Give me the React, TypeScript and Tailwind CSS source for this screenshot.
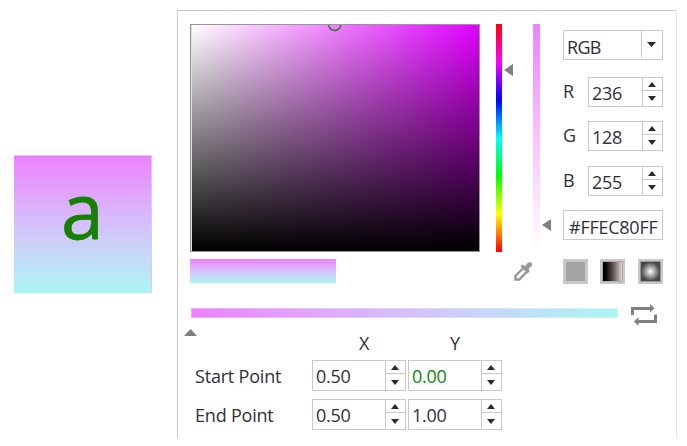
import React from "react";

function Triangle({ points, w, h, fill = "#808080" }: { points: string; w: number; h: number; fill?: string }) {
  return (
    <svg width={w} height={h} viewBox={`0 0 ${w} ${h}`} className="block shrink-0">
      <polygon points={points} fill={fill} />
    </svg>
  );
}

function Spinner({ value, size, text = "" }: { value: string; size: string; text?: string }) {
  return (
    <div className={`flex shrink-0 border border-[#c9c9c9] ${size}`}>
      <div className={`flex-1 pt-[2px] pl-[3px] leading-[26px] tracking-[-0.3px] ${text}`}>{value}</div>
      <div className="flex w-[20px] flex-col border-l border-[#c9c9c9]">
        <div className="flex h-[13px] items-center justify-center border-b border-[#c9c9c9] pr-px">
          <Triangle points="4,0 8,5 0,5" w={8} h={5} fill="#2b2b2b" />
        </div>
        <div className="flex flex-1 items-center justify-center pr-px">
          <Triangle points="0,0 8,0 4,5" w={8} h={5} fill="#2b2b2b" />
        </div>
      </div>
    </div>
  );
}

function Channel({ name, value }: { name: string; value: string }) {
  return (
    <div className="flex h-[30px] justify-between">
      <span className="leading-[28px]">{name}</span>
      <Spinner value={value} size="h-[30px] w-[75px]" />
    </div>
  );
}

function PointRow({ label, x, y, green = "" }: { label: string; x: string; y: string; green?: string }) {
  return (
    <div className="flex h-[31px] gap-[2px] pl-[17px]">
      <span className="w-[115px] pt-[1px] leading-[31px] tracking-[-0.2px]">{label}</span>
      <Spinner value={x} size="h-[31px] w-[94px]" />
      <Spinner value={y} size="h-[31px] w-[94px]" text={green} />
    </div>
  );
}

export default function App() {
  return (
    <div className="flex h-[446px] w-[687px] overflow-hidden bg-white font-['Open_Sans','Noto_Sans',sans-serif] text-[18px] text-[#303036]">
      <div className="mt-[155px] ml-[14px] h-[138px] w-[138px] shrink-0 border-t border-r border-[#e4c4fa] bg-linear-to-b from-[#ec80ff] to-[#aaf6f3] text-center text-[77px] leading-[108px] text-[#178000] [-webkit-text-stroke:0.8px_#178000]">
        a
      </div>
      <div className="mt-[10px] ml-[25px] h-[428px] w-[500px] shrink-0 border-t border-r border-l border-t-[#c9c9c9] border-r-[#e5e5e5] border-l-[#c9c9c9]">
        <div className="mt-[13px] flex h-[228px] pl-[12px]">
          <div className="relative h-[228px] w-[290px] overflow-hidden border border-[#969696] bg-[linear-gradient(to_top,#000,transparent),linear-gradient(to_right,#fff,#e000ff)]">
            <div className="h-full w-px bg-[#e0e0e0]" />
            <svg className="absolute top-0 left-[137px]" width="14" height="7" viewBox="0 0 14 7">
              <path d="M.7 0a6 5.5 0 0 0 12 0" fill="none" stroke="#31752f" strokeWidth="1.4" />
            </svg>
          </div>
          <div className="ml-[16px] w-[6px] bg-[linear-gradient(to_bottom,#f00,#f0f_16.7%,#00f_33.3%,#0ff_50%,#0f0_66.7%,#ff0_83.3%,#f00)]" />
          <div className="ml-[2px] w-[9px] pt-[40px]">
            <Triangle points="9,0 9,12 0,6" w={9} h={12} />
          </div>
          <div className="ml-[20px] w-[7px] bg-linear-to-b from-[#ec80ff] to-white" />
          <div className="ml-[2px] w-[9px] pt-[195px]">
            <Triangle points="9,0 9,12 0,6" w={9} h={12} />
          </div>
          <div className="ml-[12px] flex w-[100px] flex-col pt-[6px]">
            <div className="flex h-[30px] shrink-0 border border-[#c9c9c9]">
              <span className="flex-1 pt-[2px] pl-[3px] leading-[28px] tracking-[-0.7px]">RGB</span>
              <span className="mb-px flex w-[21px] items-center justify-center border-l border-[#c9c9c9] pr-[2px]">
                <Triangle points="0,0 9,0 4.5,5" w={9} h={5} fill="#2b2b2b" />
              </span>
            </div>
            <div className="mt-[17px] flex flex-col">
              <Channel name="R" value="236" />
              <div className="h-[14px]" />
              <Channel name="G" value="128" />
              <div className="h-[15px]" />
              <Channel name="B" value="255" />
            </div>
            <div className="mt-[14px] h-[30px] shrink-0 border border-[#c9c9c9] pt-[2px] pl-[5px] leading-[28px] tracking-[-0.25px]">#FFEC80FF</div>
          </div>
        </div>
        <div className="mt-[7px] flex h-[25px] pl-[12px]">
          <div className="h-[24px] w-[146px] bg-linear-to-b from-[#ec80ff] to-[#aaf6f3]" />
          <svg className="mt-[3px] ml-[178px]" width="18" height="19" viewBox="0 0 18 19">
            <path d="M10 5.5L1.5 13.7V17.5H5.2L13.5 9.2" fill="#fff" stroke="#969696" strokeWidth="2.4" />
            <path d="M6.5 4.5l2-2L11 4.3 13.7 1Q16-.6 17.5 1T17.2 4.3L14.5 7l1.3 2-2 2.5z" fill="#969696" />
          </svg>
          <div className="ml-[31px] h-[25px] w-[25px] border-[3px] border-[#c9c9c9] bg-[#a4a4a4]" />
          <div className="ml-[12px] h-[25px] w-[25px] border-2 border-[#c9c9c9] bg-[#aaa] p-px">
            <div className="h-full w-full bg-linear-to-r from-black to-[#e2d1d1]" />
          </div>
          <div className="ml-[13px] h-[25px] w-[25px] border-2 border-[#c9c9c9] bg-[#999] p-px">
            <div className="h-full w-full bg-[radial-gradient(circle_closest-side,#fff,#484848)]" />
          </div>
        </div>
        <div className="mt-[20px] flex h-[22px] pl-[13px]">
          <div className="mt-[4px] h-[10px] w-[427px] border border-[#ffffff50] bg-linear-to-r from-[#ec80ff] to-[#aaf6f3] [background-origin:border-box]" />
          <svg className="ml-[13px]" width="26" height="22" viewBox="0 0 26 22" fill="#808080">
            <path d="M0 3H19V0L23.5 4.2L19 8.5V6H3V11H0Z" />
            <path d="M26 19H7.5V22L3 17.5L7.5 13V16H23V10.5H26Z" />
          </svg>
        </div>
        <div className="mt-[3px] ml-[6px]">
          <Triangle points="6.5,0 13,7 0,7" w={13} h={7} />
        </div>
        <div className="flex h-[24px] pl-[181px] leading-[14px]">
          <span className="w-[91px]">X</span>
          <span>Y</span>
        </div>
        <PointRow label="Start Point" x="0.50" y="0.00" green="text-[#0a850a]" />
        <div className="h-[8px]" />
        <PointRow label="End Point" x="0.50" y="1.00" />
      </div>
    </div>
  );
}
